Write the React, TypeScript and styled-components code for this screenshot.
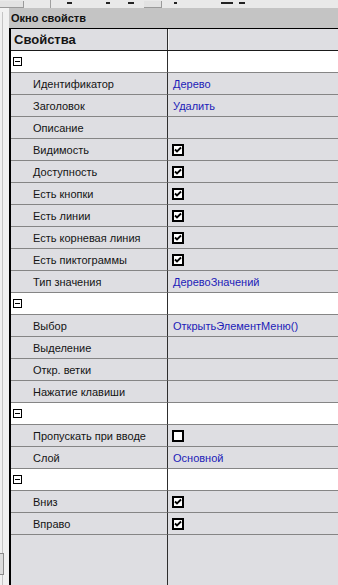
import React from "react";
import styled, { createGlobalStyle } from "styled-components";

const Global = createGlobalStyle`
  html, body { margin: 0; padding: 0; background: #ececec; }
  body { font-family: "Liberation Sans", Arial, sans-serif; }
`;

const Page = styled.div`
  width: 338px;
  height: 585px;
  overflow: hidden;
  display: flex;
  flex-direction: column;
  background: #ececec;
`;

const Toolbar = styled.div`
  height: 8px;
  display: flex;
  align-items: flex-end;
  background: #e9e9e9;
  flex: none;
  position: relative;
`;

const ToolButton = styled.div<{ $w: number; $ml: number }>`
  width: ${(p) => p.$w}px;
  margin-left: ${(p) => p.$ml}px;
  height: 7px;
  box-sizing: border-box;
  border-right: 1px solid #9a9a9a;
  border-bottom: 1px solid #9a9a9a;
  background: #e2e2e2;
`;

const ToolMark = styled.div<{ $w: number; $ml: number }>`
  width: ${(p) => p.$w}px;
  margin-left: ${(p) => p.$ml}px;
  height: 2px;
  margin-bottom: 4px;
  background: #222;
`;

const ToolSep = styled.div<{ $ml: number }>`
  width: 1px;
  margin-left: ${(p) => p.$ml}px;
  height: 8px;
  background: #a0a0a0;
`;

const Body = styled.div`
  flex: 1;
  display: flex;
  min-height: 0;
`;

const LeftStrip = styled.div`
  width: 9px;
  flex: none;
  background: #f1f1f1;
  display: flex;
  flex-direction: column;
  box-sizing: border-box;
  padding-top: 4px;
`;

const StripLine = styled.div`
  flex: 1;
  width: 1px;
  margin-left: 2px;
  background: #c4c4c4;
  position: relative;
`;

const StripNub = styled.div`
  position: absolute;
  left: -2px;
  bottom: 10px;
  width: 3px;
  height: 20px;
  border: 1px solid #8a8a8a;
  border-left: none;
  background: #dcdcdc;
`;

const Panel = styled.div`
  flex: 1;
  display: flex;
  flex-direction: column;
  min-width: 0;
`;

const TitleBar = styled.div`
  height: 20px;
  flex: none;
  background: #c4c4c4;
  display: flex;
  align-items: center;
  padding-left: 2px;
  font-weight: bold;
  font-size: 11px;
  color: #111;
`;

const Table = styled.div`
  flex: 1;
  display: flex;
  flex-direction: column;
  border-top: 1px solid #000;
  border-left: 2px solid #000;
  background: #dedee2;
`;

const Row = styled.div<{ $group?: boolean; $header?: boolean }>`
  display: grid;
  grid-template-columns: 157px 1fr;
  height: ${(p) => (p.$header ? 21 : 22)}px;
  flex: none;
  background: ${(p) => (p.$group ? "#ffffff" : "#dedee2")};
  border-bottom: ${(p) => (p.$header ? "1px solid #1a1a1a" : "none")};
`;

const NameCell = styled.div<{ $header?: boolean; $group?: boolean }>`
  border-right: 1px solid #2e2e2e;
  border-bottom: ${(p) => (p.$header ? "none" : "1px solid #858585")};
  display: flex;
  align-items: center;
  padding-left: ${(p) => (p.$header ? 3 : p.$group ? 2 : 22)}px;
  font-size: ${(p) => (p.$header ? 13 : 11)}px;
  font-weight: ${(p) => (p.$header ? "bold" : "normal")};
  color: #141414;
  white-space: nowrap;
  overflow: hidden;
`;

const ValueCell = styled.div<{ $header?: boolean }>`
  border-bottom: ${(p) => (p.$header ? "none" : "1px solid #858585")};
  border-left: ${(p) => (p.$header ? "1px solid #f4f4f4" : "none")};
  display: flex;
  align-items: center;
  padding-left: 4px;
  font-size: 11px;
  color: #1c1cb8;
  white-space: nowrap;
  overflow: hidden;
`;

const ValueText = styled.span`
  padding-left: 1px;
`;

const Filler = styled.div`
  flex: 1;
  display: grid;
  grid-template-columns: 157px 1fr;
`;

const FillerLeft = styled.div`
  border-right: 1px solid #2e2e2e;
`;

const Collapse = styled.div`
  width: 9px;
  height: 9px;
  box-sizing: border-box;
  border: 1px solid #000;
  position: relative;
  &::after {
    content: "";
    position: absolute;
    left: 1px;
    right: 1px;
    top: 3px;
    height: 1px;
    background: #000;
  }
`;

const CheckBox = styled.div`
  width: 12px;
  height: 12px;
  box-sizing: border-box;
  border: 2px solid #000;
  background: #fff;
  display: flex;
  align-items: center;
  justify-content: center;
`;

const Check = () => (
  <svg width="8" height="8" viewBox="0 0 8 8">
    <path d="M1 3.5 L3 5.5 L7 1.5" stroke="#000" strokeWidth="1.8" fill="none" />
  </svg>
);

type Item =
  | { kind: "group" }
  | { kind: "prop"; name: string; value?: string; check?: boolean };

const items: Item[] = [
  { kind: "group" },
  { kind: "prop", name: "Идентификатор", value: "Дерево" },
  { kind: "prop", name: "Заголовок", value: "Удалить" },
  { kind: "prop", name: "Описание" },
  { kind: "prop", name: "Видимость", check: true },
  { kind: "prop", name: "Доступность", check: true },
  { kind: "prop", name: "Есть кнопки", check: true },
  { kind: "prop", name: "Есть линии", check: true },
  { kind: "prop", name: "Есть корневая линия", check: true },
  { kind: "prop", name: "Есть пиктограммы", check: true },
  { kind: "prop", name: "Тип значения", value: "ДеревоЗначений" },
  { kind: "group" },
  { kind: "prop", name: "Выбор", value: "ОткрытьЭлементМеню()" },
  { kind: "prop", name: "Выделение" },
  { kind: "prop", name: "Откр. ветки" },
  { kind: "prop", name: "Нажатие клавиши" },
  { kind: "group" },
  { kind: "prop", name: "Пропускать при вводе", check: false },
  { kind: "prop", name: "Слой", value: "Основной" },
  { kind: "group" },
  { kind: "prop", name: "Вниз", check: true },
  { kind: "prop", name: "Вправо", check: true },
];

export default function App() {
  return (
    <>
      <Global />
      <Page>
        <Toolbar>
          <ToolButton $w={24} $ml={0} />
          <ToolSep $ml={26} />
          <ToolMark $w={5} $ml={16} />
          <ToolMark $w={4} $ml={34} />
          <ToolMark $w={6} $ml={18} />
          <ToolButton $w={18} $ml={10} />
          <ToolMark $w={3} $ml={12} />
          <ToolMark $w={12} $ml={44} />
          <ToolMark $w={6} $ml={6} />
        </Toolbar>
        <Body>
          <LeftStrip>
            <StripLine>
              <StripNub />
            </StripLine>
          </LeftStrip>
          <Panel>
            <TitleBar>Окно свойств</TitleBar>
            <Table>
              <Row $header>
                <NameCell $header>Свойства</NameCell>
                <ValueCell $header />
              </Row>
              {items.map((it, i) =>
                it.kind === "group" ? (
                  <Row key={i} $group>
                    <NameCell $group>
                      <Collapse />
                    </NameCell>
                    <ValueCell />
                  </Row>
                ) : (
                  <Row key={i}>
                    <NameCell>{it.name}</NameCell>
                    <ValueCell>
                      {it.check !== undefined ? (
                        <CheckBox>{it.check && <Check />}</CheckBox>
                      ) : it.value ? (
                        <ValueText>{it.value}</ValueText>
                      ) : null}
                    </ValueCell>
                  </Row>
                )
              )}
              <Filler>
                <FillerLeft />
                <div />
              </Filler>
            </Table>
          </Panel>
        </Body>
      </Page>
    </>
  );
}
